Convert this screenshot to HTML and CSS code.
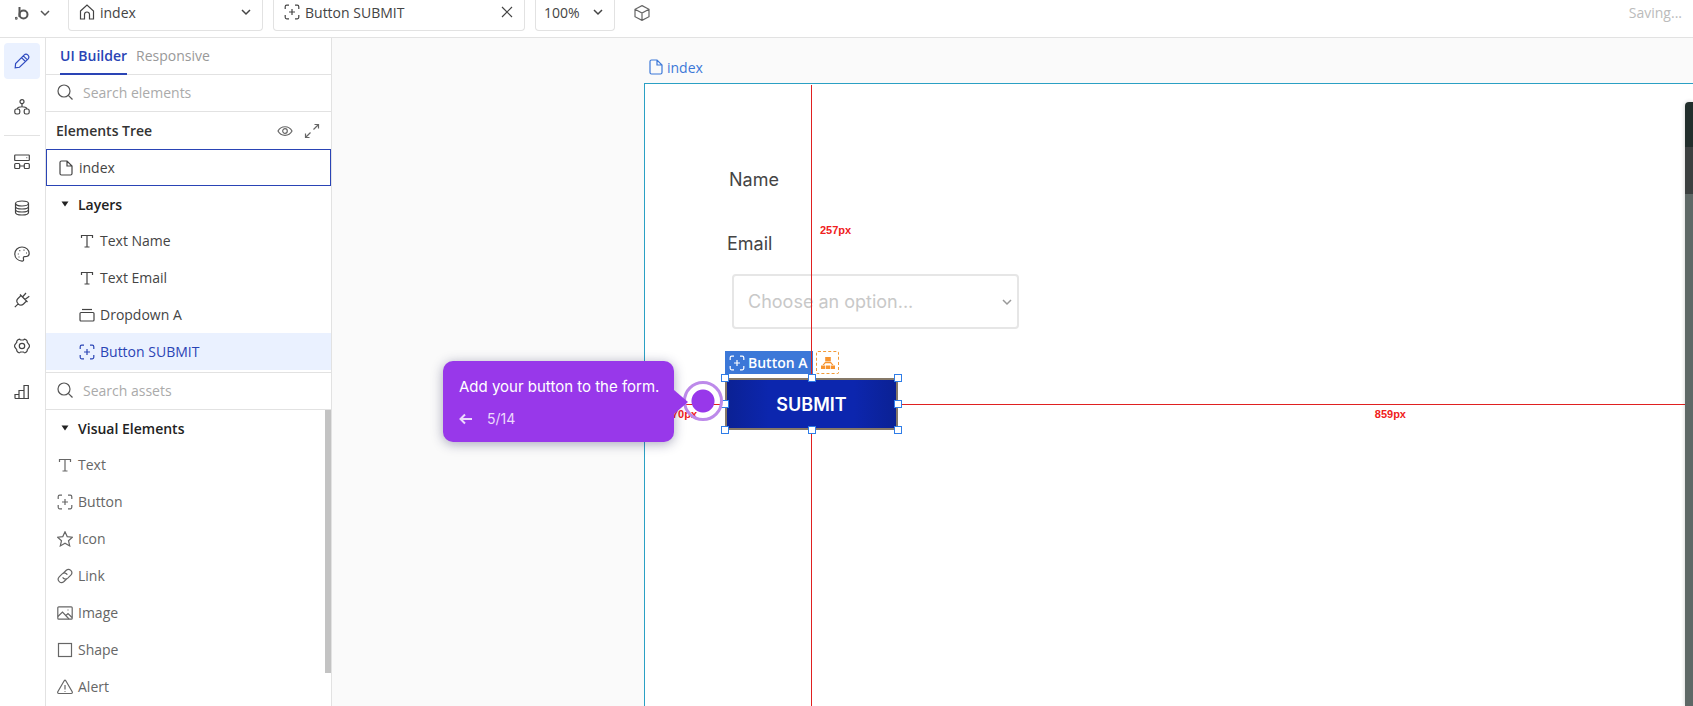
FILE: index.html
```html
<!DOCTYPE html>
<html lang="en">
<head>
    <meta charset="UTF-8">
    <meta name="viewport" content="width=device-width, initial-scale=1.0">
    <title>UI Builder</title>
    <link rel="stylesheet" href="styles.css">
</head>
<body>

    <!-- shared icons -->
    <svg class="sprite" aria-hidden="true">
        <symbol id="i-chevron" viewBox="0 0 10 10"><path d="M1 3l4 4 4-4"/></symbol>
        <symbol id="i-page" viewBox="0 0 16 16"><path d="M3.5 1h5.5l5 5v7.500q0 1.500-1.500 1.500h-9q-1.500 0-1.500-1.500v-11q0-1.500 1.500-1.500zM9 1v5h5"/></symbol>
        <symbol id="i-button" viewBox="0 0 16 16"><path d="M1.200 5V2.700q0-1.500 1.500-1.500h2.300M11 1.200h2.300q1.500 0 1.500 1.500v2.300M14.800 11v2.300q0 1.500-1.500 1.500h-2.300M5 14.800H2.700q-1.500 0-1.500-1.500v-2.300M8 5v6M5 8h6"/></symbol>
        <symbol id="i-text" viewBox="0 0 16 16"><path d="M2.500 5V2.500h11V5M8 2.500v11.500M5.500 14h5"/></symbol>
        <symbol id="i-search" viewBox="0 0 16 16"><circle cx="7" cy="7" r="6"/><path d="M11.300 11.300l4.200 4.200"/></symbol>
        <symbol id="i-caret" viewBox="0 0 8 6"><path d="M0.500 0.500h7L4 5.500z"/></symbol>
    </svg>

    <header class="topbar">
        <button class="logo" type="button" aria-label="Main menu">
            <svg class="icon icon-logo" viewBox="0 0 14 16"><path d="M4.500 2v10"/><circle cx="8.500" cy="9.500" r="4"/><circle class="fill" cx="1.200" cy="13.300" r="0.500"/></svg>
            <svg class="icon icon-chevron"><use href="#i-chevron"/></svg>
        </button>
        <div class="field field-page">
            <svg class="icon" viewBox="0 0 16 16"><path d="M1.500 7L8 1l6.500 6v8h-4v-4.500a2.500 2.500 0 0 0-5 0V15h-4z"/></svg>
            <select aria-label="Page"><option>index</option></select>
            <svg class="icon icon-chevron"><use href="#i-chevron"/></svg>
        </div>
        <div class="field field-element">
            <svg class="icon"><use href="#i-button"/></svg>
            <span class="field-text">Button SUBMIT</span>
            <button class="close" type="button" aria-label="Close">
                <svg class="icon icon-close" viewBox="0 0 12 12"><path d="M1 1l10 10M11 1L1 11"/></svg>
            </button>
        </div>
        <div class="field field-zoom">
            <select aria-label="Zoom"><option>100%</option></select>
            <svg class="icon icon-chevron"><use href="#i-chevron"/></svg>
        </div>
        <button class="cube" type="button" aria-label="Preview">
            <svg class="icon" viewBox="0 0 16 16"><path d="M8 0.600l7 3.700v7.400L8 15.400 1 11.700V4.300zM1 4.300L8 8l7-3.700M8 8v7.400"/></svg>
        </button>
        <span class="saving">Saving...</span>
    </header>

    <div class="workspace">
        <nav class="rail">
            <button class="rail-item active" type="button" aria-label="UI Builder">
                <svg class="icon" viewBox="0 0 16 16"><path d="M1.200 14.800l.4-4.300 8.400-8.400q2-1.800 4 0 1.800 2 0 4l-8.500 8.200zM7.500 4.600l3.900 3.900M9.300 2.800l3.900 3.900"/></svg>
            </button>
            <button class="rail-item" type="button" aria-label="Workflow">
                <svg class="icon" viewBox="0 0 16 16"><circle cx="8" cy="2.700" r="2"/><path d="M8 4.700v3.300M3.200 10c0-3 9.600-3 9.600 0"/><rect x="0.800" y="10" width="5" height="5" rx="1.800"/><rect x="10.200" y="10" width="5" height="5" rx="1.800"/></svg>
            </button>
            <hr class="rail-line">
            <button class="rail-item" type="button" aria-label="Components">
                <svg class="icon" viewBox="0 0 16 16"><rect x="0.700" y="1" width="14.600" height="5.500" rx="0.500"/><rect x="0.700" y="9.500" width="5" height="5" rx="1"/><rect x="10.300" y="9.500" width="5" height="5" rx="1"/><path d="M5.700 12h4.600M12.500 3.700h.7"/></svg>
            </button>
            <button class="rail-item" type="button" aria-label="Data">
                <svg class="icon" viewBox="0 0 16 16"><ellipse cx="8" cy="3.500" rx="6.500" ry="2.500"/><path d="M1.500 3.500v9c0 3.300 13 3.300 13 0v-9M1.500 6.500c0 3.300 13 3.300 13 0M1.500 9.500c0 3.300 13 3.300 13 0"/></svg>
            </button>
            <button class="rail-item" type="button" aria-label="Design system">
                <svg class="icon" viewBox="0 0 16 16"><path d="M8 15.200C3.500 14.700 0.800 11.500 0.800 7.800 0.800 4 4 1 8 1s7.200 2.700 7.200 6.500c0 3-2.500 3.200-4.500 3.200-1.500 0-1.500 1-1.200 2.300.3 1.400-.3 2.300-1.500 2.200z"/><path d="M3.800 8h1M5.300 4.700h1M9.500 4.200h1M12 7h1M4.500 11h1"/></svg>
            </button>
            <button class="rail-item" type="button" aria-label="Plugins">
                <svg class="icon" viewBox="0 0 16 16"><path d="M0.800 15.200l3.400-3.400M4.200 11.800c-2-2-1.700-3.800-.2-5.300L7 3.500l5.500 5.500-3 3c-1.500 1.500-3.300 1.800-5.300-.2zM6 2.500l7.500 7.500M8.500 5L12 1M11 7.500l4.300-3.300"/></svg>
            </button>
            <button class="rail-item" type="button" aria-label="Settings">
                <svg class="icon" viewBox="0 0 16 16"><path d="M5 1.200q1 0 1.500.8h3q.5-.8 1.500-.8 1.500.5 2.300 2-.3 1 .2 1.500l1.500 1.800q.8 1.500 0 3L13.500 11.300q-.5.500-.2 1.500-.8 1.500-2.300 2-1 0-1.500-.8h-3q-.5.800-1.500.8-1.500-.5-2.300-2 .3-1-.2-1.500L1 9.500q-.8-1.500 0-3l1.500-1.800q.5-.5.200-1.500.8-1.500 2.300-2z"/><circle cx="8" cy="8" r="2.700"/></svg>
            </button>
            <button class="rail-item" type="button" aria-label="Analytics">
                <svg class="icon" viewBox="0 0 16 16"><path d="M1 14.500v-4h4M1 14.500h14M5 14.500v-8h5M10 14.500v-13h4.300v13"/></svg>
            </button>
        </nav>

        <aside class="panel">
            <div class="tabs">
                <button class="tab active" type="button">UI Builder</button>
                <button class="tab" type="button">Responsive</button>
            </div>
            <label class="search">
                <svg class="icon"><use href="#i-search"/></svg>
                <input type="text" placeholder="Search elements" aria-label="Search elements">
            </label>
            <div class="tree-head">
                <h2>Elements Tree</h2>
                <button type="button" aria-label="Show or hide">
                    <svg class="icon" viewBox="0 0 16 16"><path d="M1 8c3-5.700 11-5.700 14 0-3 5.700-11 5.700-14 0z"/><circle cx="8" cy="8" r="2.300"/></svg>
                </button>
                <button type="button" aria-label="Expand">
                    <svg class="icon" viewBox="0 0 16 16"><path d="M9.500 6.500l5-5M10.500 1.500h4v4M6.500 9.500l-5 5M1.500 10.500v4h4"/></svg>
                </button>
            </div>
            <div class="tree">
                <div class="row page"><svg class="icon"><use href="#i-page"/></svg>index</div>
                <div class="row group"><svg class="icon-caret"><use href="#i-caret"/></svg>Layers</div>
                <div class="row layer"><svg class="icon"><use href="#i-text"/></svg>Text Name</div>
                <div class="row layer"><svg class="icon"><use href="#i-text"/></svg>Text Email</div>
                <div class="row layer"><svg class="icon" viewBox="0 0 16 16"><rect x="1" y="5.500" width="14" height="8.500" rx="1"/><path d="M3 2.500h10"/></svg>Dropdown A</div>
                <div class="row layer selected"><svg class="icon"><use href="#i-button"/></svg>Button SUBMIT</div>
            </div>
            <label class="search assets-search">
                <svg class="icon"><use href="#i-search"/></svg>
                <input type="text" placeholder="Search assets" aria-label="Search assets">
            </label>
            <div class="assets">
                <div class="row group"><svg class="icon-caret"><use href="#i-caret"/></svg>Visual Elements</div>
                <div class="row asset"><svg class="icon"><use href="#i-text"/></svg>Text</div>
                <div class="row asset"><svg class="icon"><use href="#i-button"/></svg>Button</div>
                <div class="row asset"><svg class="icon" viewBox="0 0 16 16"><path d="M8 0.800l2.200 4.800 5.200.6-3.900 3.500 1.200 5.200L8 12.200l-4.700 2.700 1.200-5.200L.6 6.200l5.200-.6z"/></svg>Icon</div>
                <div class="row asset"><svg class="icon" viewBox="0 0 16 16"><path d="M6 5.500l3-3c3.300-3 7.800 1.300 4.800 4.600l-3 3c-1.800 1.600-4.300 1-5.100-.9M10 10.500l-3 3c-3.300 3-7.800-1.300-4.800-4.600l3-3c1.800-1.600 4.300-1 5.100.9"/></svg>Link</div>
                <div class="row asset"><svg class="icon" viewBox="0 0 16 16"><rect x="0.800" y="1.800" width="14.400" height="12.400" rx="1"/><path d="M0.800 11.500L5.500 7l6.500 7M9 10.500l2-2 4 4M10.500 5h1"/></svg>Image</div>
                <div class="row asset"><svg class="icon" viewBox="0 0 16 16"><rect x="1.500" y="1.500" width="13" height="13"/></svg>Shape</div>
                <div class="row asset"><svg class="icon" viewBox="0 0 16 16"><path d="M7.200 1.800q.8-1.200 1.600 0l6.400 11q.5 1.500-1 1.700H1.800q-1.500-.2-1-1.700zM8 6v4.500M8 12v.7"/></svg>Alert</div>
                <div class="scrollbar"></div>
            </div>
        </aside>

        <main class="canvas">
            <div class="frame-label"><svg class="icon"><use href="#i-page"/></svg>index</div>
            <div class="frame">
                <span class="text text-name">Name</span>
                <label class="text text-email" for="choice">Email</label>
                <div class="dropdown">
                    <select id="choice"><option>Choose an option...</option></select>
                    <svg class="icon icon-chevron"><use href="#i-chevron"/></svg>
                </div>

                <div class="tag"><svg class="icon"><use href="#i-button"/></svg>Button A</div>
                <button class="parent" type="button" aria-label="Select parent">
                    <svg viewBox="0 0 16 16"><path d="M5.200 2h5.600v4.500H5.200zM5 7h6l2.500 3H12L10.500 8.200h-5L4 10H2.500zM1 10.500h4.200V14H1zM5.900 10.500h4.200V14H5.900zM10.800 10.500H15V14h-4.200z"/></svg>
                </button>
                <div class="guide guide-v"></div>
                <div class="guide guide-h"></div>
                <span class="measure measure-top">257px</span>
                <span class="measure measure-right">859px</span>
                <span class="measure measure-left">70px</span>

                <div class="selection">
                    <button class="submit" type="button">SUBMIT</button>
                    <i class="handle top left"></i>
                    <i class="handle top center"></i>
                    <i class="handle top right"></i>
                    <i class="handle middle left"></i>
                    <i class="handle middle right"></i>
                    <i class="handle bottom left"></i>
                    <i class="handle bottom center"></i>
                    <i class="handle bottom right"></i>
                </div>

                <div class="beacon"></div>
                <div class="tour">
                    <p>Add your button to the form.</p>
                    <div class="tour-nav">
                        <button type="button" aria-label="Back">
                            <svg class="icon icon-back" viewBox="0 0 14 12"><path d="M13 6H1.500M6 1.500L1.500 6 6 10.500"/></svg>
                        </button>
                        <span>5/14</span>
                    </div>
                </div>
            </div>
            <div class="drawer"></div>
        </main>
    </div>

</body>
</html>
```

FILE: styles.css
```css
* {
    box-sizing: border-box;
}

body {
    margin: 0;
    height: 100vh;
    overflow: hidden;
    display: flex;
    flex-direction: column;
    font-family: "Open Sans", "Noto Sans", sans-serif;
    font-size: 14px;
    color: #444;
    background-color: #fff;
}

button, input, select {
    font: inherit;
    color: inherit;
    background: none;
    border: 0;
    padding: 0;
    margin: 0;
}

select {
    appearance: none;
    flex: 1;
    min-width: 0;
}

h2, p {
    margin: 0;
}

.sprite {
    position: absolute;
    width: 0;
    height: 0;
}

.icon {
    width: 16px;
    height: 16px;
    flex: none;
    display: block;
    fill: none;
    stroke: currentColor;
    stroke-width: 1.2;
}

.icon-chevron {
    width: 10px;
    height: 10px;
    stroke-width: 1.5;
}

.icon-caret {
    width: 8px;
    height: 6px;
    fill: #222;
}

/* top bar */
.topbar {
    flex: none;
    height: 38px;
    display: flex;
    align-items: flex-start;
    gap: 10px;
    padding-right: 11px;
    border-bottom: 1px solid #e2e2e2;
}

.logo, .cube, .saving, .field {
    height: 31px;
    display: flex;
    align-items: center;
    padding-bottom: 6px;
}

.logo {
    width: 58px;
    padding-left: 15px;
    gap: 11px;
    color: #555;
}

.icon-logo {
    width: 14px;
    stroke-width: 2;
}

.icon .fill {
    fill: currentColor;
}

.field {
    gap: 5px;
    padding-left: 10px;
    padding-right: 11px;
    border: 1px solid #e2e2e2;
    border-top: 0;
    border-radius: 0 0 4px 4px;
}

.field-page {
    width: 195px;
}

.field-element {
    width: 252px;
}

.field-zoom {
    width: 80px;
    padding-left: 8px;
}

.field-text {
    flex: 1;
}

.icon-close {
    width: 12px;
    height: 12px;
}

.cube {
    margin-left: 9px;
    color: #666;
}

.saving {
    margin-left: auto;
    color: #bbb;
}

/* left rail */
.workspace {
    flex: 1;
    min-height: 0;
    display: flex;
}

.rail {
    flex: none;
    width: 46px;
    padding: 5px 5px 0 4px;
    display: flex;
    flex-direction: column;
    gap: 10px;
    border-right: 1px solid #e2e2e2;
    color: #444;
}

.rail-item {
    height: 36px;
    display: flex;
    align-items: center;
    justify-content: center;
    border-radius: 4px;
}

.rail-item.active {
    background-color: #eaf1ff;
    color: #2f4bc0;
}

.rail-line {
    width: 100%;
    margin: 0 0 -2px;
    border: 0;
    border-top: 1px solid #e2e2e2;
}

/* elements panel */
.panel {
    flex: none;
    width: 286px;
    display: flex;
    flex-direction: column;
    border-right: 1px solid #e2e2e2;
}

.tabs {
    height: 37px;
    display: flex;
    gap: 9px;
    padding-left: 14px;
    border-bottom: 1px solid #e2e2e2;
}

.tab {
    height: 37px;
    color: #999;
    border-bottom: 2px solid transparent;
}

.tab.active {
    font-weight: 600;
    color: #2a44b5;
    border-color: #2a44b5;
}

.search {
    height: 37px;
    flex: none;
    display: flex;
    align-items: center;
    gap: 10px;
    padding: 0 11px 2px;
    border-bottom: 1px solid #e2e2e2;
    color: #555;
}

.search input {
    flex: 1;
    min-width: 0;
    outline: 0;
}

.search input::placeholder {
    color: #aaa;
    opacity: 1;
}

.tree-head {
    height: 37px;
    display: flex;
    align-items: center;
    gap: 11px;
    padding: 0 11px 0 10px;
    color: #666;
}

.tree-head h2 {
    flex: 1;
    font-size: 14px;
    font-weight: 600;
    color: #333;
}

.row {
    height: 37px;
    display: flex;
    align-items: center;
    gap: 5px;
}

.row.page {
    border: 1px solid #2a44b5;
    padding-left: 11px;
}

.row.group {
    height: 36px;
    gap: 9px;
    padding-left: 15px;
    font-weight: 600;
    color: #222;
}

.row.layer {
    padding-left: 33px;
}

.row.selected {
    background-color: #eaf1ff;
    color: #2a44b5;
}

.row.asset {
    padding-left: 11px;
    color: #666;
}

.assets-search {
    margin-top: 2px;
    height: 38px;
    border-top: 1px solid #e2e2e2;
}

.assets {
    position: relative;
    flex: 1;
    min-height: 0;
    overflow: hidden;
}

.scrollbar {
    position: absolute;
    top: 0;
    right: 0;
    width: 6px;
    height: 89%;
    background-color: #c3c3c3;
}

/* canvas */
.canvas {
    position: relative;
    flex: 1;
    min-width: 0;
    display: flex;
    flex-direction: column;
    padding-left: 312px;
    background-color: #fafafa;
}

.frame-label {
    height: 45px;
    display: flex;
    align-items: center;
    gap: 3px;
    padding: 13px 0 0 4px;
    color: #3c78d8;
}

.frame {
    position: relative;
    flex: 1;
    background-color: #fff;
    border-top: 1px solid #2aa0c4;
    border-left: 1px solid #2aa0c4;
    font-family: Inter, sans-serif;
    font-size: 18px;
}

.text {
    position: absolute;
    line-height: 24px;
}

.text-name {
    left: 84px;
    top: 84px;
}

.text-email {
    left: 82px;
    top: 148px;
}

.dropdown {
    position: absolute;
    left: 87px;
    top: 190px;
    width: 287px;
    height: 55px;
    display: flex;
    align-items: center;
    padding: 0 5px 0 14px;
    border: 2px solid #e6e6e6;
    border-radius: 4px;
    color: #c8c8c8;
}

.dropdown .icon-chevron {
    color: #999;
}

.tag {
    position: absolute;
    left: 80px;
    top: 267px;
    width: 88px;
    height: 23px;
    display: flex;
    align-items: center;
    gap: 3px;
    padding-left: 4px;
    background-color: #3c78d8;
    color: #fff;
    font-family: "Open Sans", sans-serif;
    font-size: 14px;
    font-weight: 600;
}

.parent {
    position: absolute;
    left: 171px;
    top: 267px;
    width: 23px;
    height: 23px;
    display: flex;
    align-items: center;
    justify-content: center;
    border: 1px dashed #f29a38;
    border-radius: 2px;
}

.parent svg {
    width: 16px;
    height: 16px;
    fill: #f7942f;
}

.guide {
    position: absolute;
    background-color: #e02020;
}

.guide-v {
    left: 166px;
    top: 1px;
    bottom: 0;
    width: 1px;
}

.guide-h {
    left: 0;
    right: 8px;
    top: 320px;
    height: 1px;
}

.measure {
    position: absolute;
    font-family: "Liberation Sans", sans-serif;
    font-size: 11px;
    font-weight: 700;
    line-height: 12px;
    color: #f02020;
}

.measure-top {
    left: 175px;
    top: 140px;
}

.measure-right {
    right: 287px;
    top: 324px;
}

.measure-left {
    left: 27px;
    top: 324px;
}

.selection {
    position: absolute;
    left: 80px;
    top: 294px;
    width: 173px;
    height: 52px;
}

.submit {
    width: 100%;
    height: 100%;
    border: 2px solid #857868;
    background: linear-gradient(90deg, #0b2194, #0c26ae 25%, #0c26ae 75%, #0b2194);
    color: #fff;
    font-weight: 600;
}

.handle {
    position: absolute;
    width: 8px;
    height: 8px;
    margin: -4px;
    background-color: #fff;
    border: 1px solid #2f7de8;
}

.top { top: 0; }
.middle { top: 50%; }
.bottom { top: 100%; }
.left { left: 0; }
.center { left: 50%; }
.right { left: 100%; }

/* guided tour */
.beacon {
    position: absolute;
    left: 38px;
    top: 297px;
    width: 40px;
    height: 40px;
    border: 3px solid #bd8aea;
    border-radius: 50%;
    background: radial-gradient(circle, #9838ea 11px, transparent 12px);
}

.tour {
    position: absolute;
    left: -202px;
    top: 277px;
    width: 231px;
    height: 81px;
    padding: 16px;
    display: flex;
    flex-direction: column;
    gap: 12px;
    border-radius: 10px;
    background-color: #9838ea;
    box-shadow: 0 2px 12px rgba(40, 40, 90, 0.4);
    color: #fff;
    font-size: 15px;
    line-height: 20px;
}

.tour p {
    white-space: nowrap;
}

.tour::after {
    content: "";
    position: absolute;
    left: 100%;
    top: 29px;
    border: 12px solid transparent;
    border-left: 14px solid #9838ea;
    border-right: 0;
}

.tour-nav {
    display: flex;
    align-items: center;
    gap: 14px;
    color: #ecd9fc;
    font-size: 14px;
}

.icon-back {
    width: 14px;
    height: 12px;
    stroke-width: 2;
}

/* collapsed drawer on the right edge */
.drawer {
    position: absolute;
    right: 0;
    top: 64px;
    bottom: 0;
    width: 8px;
    border-radius: 4px 0 0 0;
    background: linear-gradient(#222e2c 45px, #3c4040 45px, #3c4040 92px, #5e6866 92px);
    box-shadow: 0 0 4px rgba(0, 0, 0, 0.2);
}
```
